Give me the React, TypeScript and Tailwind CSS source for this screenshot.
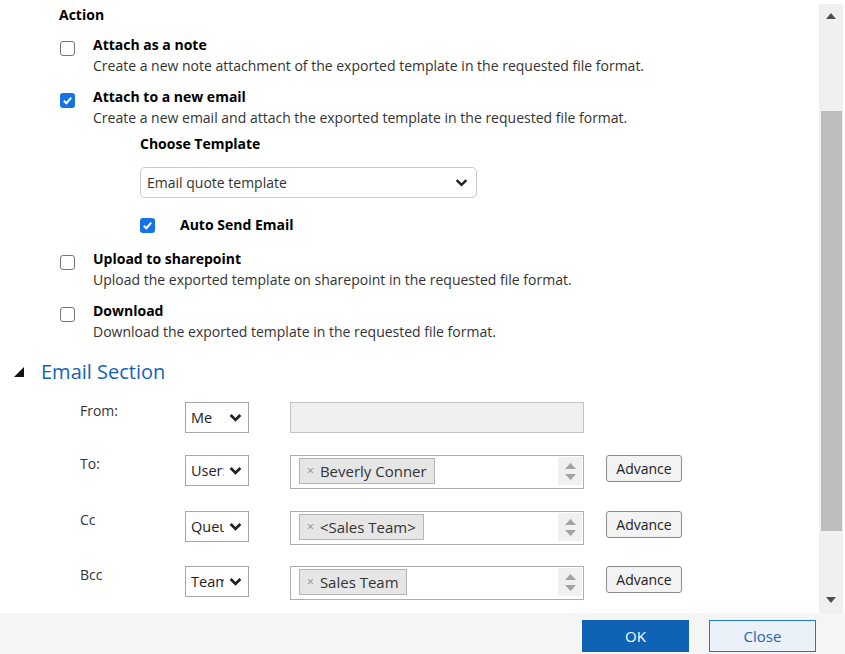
import type { ReactNode } from "react";

function Box({ checked }: { checked?: boolean }) {
  if (checked) {
    return (
      <span className="flex h-[15px] w-[15px] items-center justify-center rounded-[3px] bg-[#1473e6]">
        <svg width="11" height="11" viewBox="0 0 11 11">
          <polyline points="1.8,5.8 4.4,8.2 9.2,2.6" fill="none" stroke="white" strokeWidth="2" />
        </svg>
      </span>
    );
  }
  return <span className="block h-[15px] w-[15px] rounded-[3px] border-[1.5px] border-[#767676] bg-white" />;
}

function Chevron({ size = 12, width = 2.4 }: { size?: number; width?: number }) {
  return (
    <svg width={size} height={size} viewBox="0 0 12 12">
      <polyline points="1.5,3.8 6,8.2 10.5,3.8" fill="none" stroke="#222" strokeWidth={width} />
    </svg>
  );
}

function Option({ title, desc, checked }: { title: string; desc: string; checked?: boolean }) {
  return (
    <div className="flex">
      <div className="ml-px mt-[6px] shrink-0">
        <Box checked={checked} />
      </div>
      <div className="ml-[18px]">
        <div className="h-5 text-[14px] leading-5 font-bold text-black">{title}</div>
        <div className="mt-px h-5 text-[14px] leading-5 text-[#333]">{desc}</div>
      </div>
    </div>
  );
}

function SmallSelect({ value }: { value: string }) {
  return (
    <div className="flex h-[31px] w-[64px] shrink-0 items-center border border-[#a6a6a6] bg-white pl-[5px]">
      <span className="w-[33px] overflow-hidden text-[14.5px] whitespace-nowrap text-[#222]">{value}</span>
      <span className="ml-[5px]">
        <Chevron size={13} width={2.6} />
      </span>
    </div>
  );
}

function TagInput({ tag }: { tag: string }) {
  return (
    <div className="flex h-[34px] w-[294px] shrink-0 items-start justify-between border border-[#adadad] bg-white">
      <span className="mt-[2px] ml-[8px] flex h-[26px] items-center border border-[#b5b5b5] bg-[#e6e6e6] pr-[7px] pl-[7px] text-[15px] text-[#333]">
        <span className="mr-[6px] text-[12px] text-[#8a8a8a]">×</span>
        {tag}
      </span>
      <span className="mt-px mr-px flex h-[28px] w-[24px] flex-col items-center justify-center gap-[5px] bg-[#f0f0f0]">
        <svg width="11" height="6" viewBox="0 0 11 6">
          <polygon points="5.5,0 11,6 0,6" fill="#a3a3a3" />
        </svg>
        <svg width="11" height="6" viewBox="0 0 11 6">
          <polygon points="0,0 11,0 5.5,6" fill="#a3a3a3" />
        </svg>
      </span>
    </div>
  );
}

function EmailRow({ label, children }: { label: string; children: ReactNode }) {
  return (
    <div className="flex items-start">
      <div className="-mt-px w-[105px] shrink-0 text-[14px] leading-5 text-[#333]">{label}</div>
      {children}
    </div>
  );
}

function AdvanceButton() {
  return (
    <button className="ml-[22px] h-[27px] w-[76px] rounded-[3px] border border-[#8a8a8a] bg-[#f3f3f3] text-[14px] text-[#222]">
      Advance
    </button>
  );
}

export default function App() {
  return (
    <div className="flex h-[654px] w-[845px] flex-col overflow-hidden bg-white font-['Open_Sans',sans-serif]">
      <div className="flex h-[613px] shrink-0">
        <div className="flex-1 overflow-hidden">
          <div className="pt-[5px] pl-[59px]">
            <div className="h-5 text-[14px] leading-5 font-bold text-black">Action</div>
            <div className="mt-[10px]">
              <Option title="Attach as a note" desc="Create a new note attachment of the exported template in the requested file format." />
            </div>
            <div className="mt-[11px]">
              <Option
                checked
                title="Attach to a new email"
                desc="Create a new email and attach the exported template in the requested file format."
              />
            </div>
            <div className="ml-[81px]">
              <div className="mt-[6px] h-5 text-[14px] leading-5 font-bold text-black">Choose Template</div>
              <div className="mt-[13px] flex h-[31px] w-[337px] items-center justify-between rounded-[5px] border border-[#c8c8c8] bg-white pr-[8px] pl-[6px]">
                <span className="text-[14px] text-[#333]">Email quote template</span>
                <Chevron size={13} width={2.2} />
              </div>
              <div className="mt-[17px] flex h-5 items-center">
                <Box checked />
                <span className="ml-[25px] text-[14px] leading-5 font-bold text-black">Auto Send Email</span>
              </div>
            </div>
            <div className="mt-[14px]">
              <Option title="Upload to sharepoint" desc="Upload the exported template on sharepoint in the requested file format." />
            </div>
            <div className="mt-[11px]">
              <Option title="Download" desc="Download the exported template in the requested file format." />
            </div>
          </div>

          <div className="mt-[16px] flex h-[28px] items-center pl-[14px]">
            <svg width="10" height="10" viewBox="0 0 10 10">
              <polygon points="10,0 10,10 0,10" fill="#111" />
            </svg>
            <span className="ml-[17px] text-[20px] leading-7 text-[#1662b8]">Email Section</span>
          </div>

          <div className="mt-[16px] flex flex-col pl-[80px]">
            <EmailRow label="From:">
              <SmallSelect value="Me" />
              <div className="ml-[41px] h-[31px] w-[294px] border border-[#c2c2c2] bg-[#efefef]" />
            </EmailRow>
            <div className="mt-[22px]">
              <EmailRow label="To:">
                <SmallSelect value="User:" />
                <div className="ml-[41px]">
                  <TagInput tag="Beverly Conner" />
                </div>
                <AdvanceButton />
              </EmailRow>
            </div>
            <div className="mt-[22px]">
              <EmailRow label="Cc">
                <SmallSelect value="Queue" />
                <div className="ml-[41px]">
                  <TagInput tag="<Sales Team>" />
                </div>
                <AdvanceButton />
              </EmailRow>
            </div>
            <div className="mt-[21px]">
              <EmailRow label="Bcc">
                <SmallSelect value="Team" />
                <div className="ml-[41px]">
                  <TagInput tag="Sales Team" />
                </div>
                <AdvanceButton />
              </EmailRow>
            </div>
          </div>
        </div>

        <div className="mt-[4px] mr-[2px] flex w-[24px] flex-col items-center bg-[#f0f0f0]">
          <svg className="mt-[9px]" width="10" height="6" viewBox="0 0 10 6">
            <polygon points="5,0 10,6 0,6" fill="#505050" />
          </svg>
          <div className="mt-[92px] h-[420px] w-[21px] bg-[#bdbdbd]" />
          <svg className="mt-[66px]" width="10" height="6" viewBox="0 0 10 6">
            <polygon points="0,0 10,0 5,6" fill="#505050" />
          </svg>
        </div>
      </div>

      <div className="flex flex-1 justify-end gap-[20px] bg-[#f5f5f5] pt-[7px] pr-[29px]">
        <button className="h-[32px] w-[107px] bg-[#0f62b6] text-[15px] text-white">OK</button>
        <button className="h-[32px] w-[107px] border border-[#1f78d1] bg-[#eaf1f9] text-[15px] text-[#2364ad]">
          Close
        </button>
      </div>
    </div>
  );
}
